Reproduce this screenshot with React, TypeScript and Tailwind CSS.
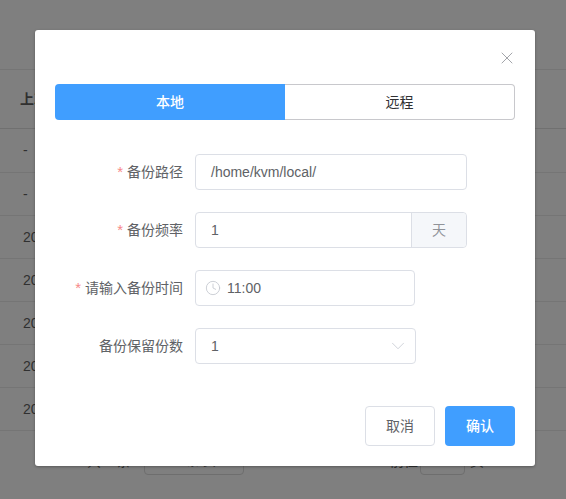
import React from "react";
import { Clock, ChevronDown, X } from "lucide-react";

const font = "font-['Liberation_Sans','Noto_Sans_CJK_SC',sans-serif]";

function Row({ children, cls = "h-[43px] pl-[23px] border-[#757575]" }: { children?: React.ReactNode; cls?: string }) {
  return (
    <div className={`${cls} border-b flex items-center text-[14px] text-[#303030]`}>
      {children}
    </div>
  );
}

function Field({ label, req, children }: { label: string; req?: boolean; children: React.ReactNode }) {
  return (
    <div className="flex items-center h-9">
      <div className="w-[140px] pr-3 text-right text-[14px] text-[#606266] whitespace-nowrap">
        {req && <span className="text-[#f78989] mr-1 text-[15px]">*</span>}
        {label}
      </div>
      {children}
    </div>
  );
}

export default function App() {
  return (
    <div className={`${font} relative w-[566px] h-[499px] overflow-hidden bg-[#7f7f7f]`}>
      <div className="pt-[69px]">
        <div className="border-t border-[#757575]">
          <Row cls="h-[59px] pl-[20px] font-bold border-[#707070]">上次备份时间</Row>
          <Row cls="h-[44px] pl-[23px] border-[#757575]">-</Row>
          <Row>-</Row>
          <Row>2023</Row>
          <Row>2023</Row>
          <Row>2023</Row>
          <Row>2023</Row>
          <Row>2023</Row>
        </div>
        <div className="flex items-center h-7 mt-4 text-[14px] text-[#303030]">
          <span className="ml-[87px] w-[57px]">共 7 条</span>
          <div className="w-[100px] h-7 border border-[#6e6e6e] rounded flex items-center justify-center text-[13px]">50条/页</div>
          <span className="ml-[146px] w-[30px]">前往</span>
          <div className="w-[45px] h-7 border border-[#6e6e6e] rounded flex items-center justify-center">1</div>
          <span className="ml-[5px]">页</span>
        </div>
      </div>

      <div className="absolute left-[35px] top-[30px] w-[500px] h-[436px] bg-white rounded-[3px] shadow-[0_1px_3px_rgba(0,0,0,0.3)] px-5">
        <div className="h-[54px] relative">
          <button className="absolute right-[-2px] top-[18px] text-[#909399]">
            <X size={20} strokeWidth={1} />
          </button>
        </div>
        <div className="flex h-9 text-[14px]">
          <div className="w-[230px] bg-[#409eff] text-white rounded-l flex items-center justify-center font-medium">本地</div>
          <div className="flex-1 border border-[#c8c8cc] border-l-0 rounded-r text-[#303133] flex items-center justify-center">远程</div>
        </div>
        <div className="mt-[34px] flex flex-col gap-[22px]">
          <Field label="备份路径" req>
            <div className="w-[272px] h-9 border border-[#dcdfe6] rounded pl-[15px] flex items-center text-[14px] text-[#606266]">/home/kvm/local/</div>
          </Field>
          <Field label="备份频率" req>
            <div className="w-[272px] h-9 border border-[#dcdfe6] rounded flex text-[14px]">
              <div className="flex-1 pl-[15px] flex items-center text-[#606266]">1</div>
              <div className="w-[55px] bg-[#f5f7fa] border-l border-[#dcdfe6] rounded-r text-[#909399] flex items-center justify-center">天</div>
            </div>
          </Field>
          <Field label="请输入备份时间" req>
            <div className="w-[220px] h-9 border border-[#dcdfe6] rounded pl-[9px] flex items-center gap-[6px] text-[14px] text-[#606266]">
              <Clock size={16} strokeWidth={1.2} className="text-[#c0c4cc]" />
              11:00
            </div>
          </Field>
          <Field label="备份保留份数">
            <div className="w-[221px] h-9 border border-[#dcdfe6] rounded pl-[15px] pr-[6px] flex items-center justify-between text-[14px] text-[#606266]">
              1
              <ChevronDown size={22} strokeWidth={0.8} className="text-[#c0c4cc]" />
            </div>
          </Field>
        </div>
        <div className="mt-[42px] flex justify-end gap-[10px] text-[14px]">
          <button className="w-[70px] h-10 border border-[#dcdfe6] rounded text-[#606266]">取消</button>
          <button className="w-[70px] h-10 bg-[#409eff] rounded text-white font-medium">确认</button>
        </div>
      </div>
    </div>
  );
}
